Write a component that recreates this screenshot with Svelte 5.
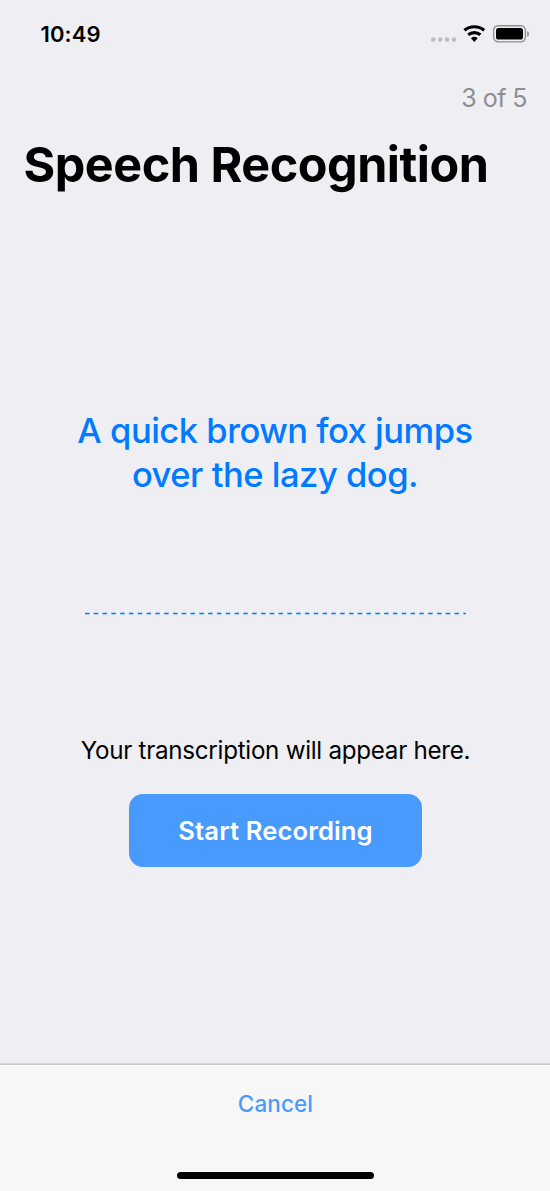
<script>
  const dots = [2.1, 9.1, 16, 22.9];
</script>

<div class="screen">
  <header class="status">
    <span class="time">10:49</span>
    <svg class="indicators" width="100" height="24" viewBox="0 0 100 24" aria-hidden="true">
      {#each dots as x}
        <circle cx={x + 1.1} cy="17.6" r="2.35" fill="#bfbfc3" />
      {/each}
      <g transform="translate(44.3 20.1)" fill="none" stroke="#000" stroke-width="3.1">
        <path d="M-9.9-11.8A15.4 15.4 0 0 1 9.9-11.8" />
        <path d="M-6.1-7.3A9.5 9.5 0 0 1 6.1-7.3" />
        <path d="M0 0L-3.4-3.9A5.2 5.2 0 0 1 3.4-3.9Z" fill="#000" stroke="none" />
      </g>
      <rect x="63.6" y="3.7" width="31.8" height="16.2" rx="4.8" fill="none" stroke="#8f8f93" stroke-width="1.4" />
      <rect x="66" y="6" width="27" height="11.6" rx="2.6" />
      <path d="M97.2 9V14.8Q99 14 99 11.9T97.2 9Z" fill="#8f8f93" />
    </svg>
  </header>
  <div class="progress">3 of 5</div>
  <h1>Speech Recognition</h1>
  <main>
    <p class="phrase">A quick brown fox jumps<br /><span>over the lazy dog.</span></p>
    <svg class="rule" width="382" height="3" viewBox="0 0 382 3" aria-hidden="true">
      <path d="M0 1.5H381" stroke="#a9d0fb" stroke-width="3" stroke-dasharray="4.4 4.4" />
      <path d="M0 1.5H381" stroke="#087bf5" stroke-width="1" stroke-dasharray="4.4 4.4" />
    </svg>
    <p class="hint">Your transcription will appear here.</p>
    <button class="record">Start Recording</button>
  </main>
  <footer>
    <button class="cancel">Cancel</button>
    <div class="home"></div>
  </footer>
</div>

<style>
  :global(body) {
    margin: 0;
    background: #efeef3;
  }
  .screen {
    width: 550px;
    height: 1191px;
    display: flex;
    flex-direction: column;
    overflow: hidden;
    background: #efeef3;
    color: #000;
    font-family: Inter, sans-serif;
  }
  .status {
    display: flex;
    justify-content: space-between;
    height: 60px;
    padding: 22px 20px 0 40.5px;
    box-sizing: border-box;
  }
  .time {
    font-size: 22px;
    font-weight: 600;
    line-height: 24px;
    letter-spacing: 0.1px;
  }
  .indicators {
    display: block;
  }
  .progress {
    height: 60px;
    padding: 22px 23px 0 0;
    box-sizing: border-box;
    text-align: right;
    font-size: 25px;
    line-height: 32px;
    letter-spacing: -0.55px;
    color: #8e8e92;
  }
  h1 {
    margin: 0;
    padding: 15px 0 0 23.5px;
    height: 80px;
    box-sizing: border-box;
    font-size: 48.5px;
    line-height: 60px;
    font-weight: 700;
    letter-spacing: -0.48px;
    white-space: nowrap;
  }
  main {
    flex: 1;
    display: flex;
    flex-direction: column;
    align-items: center;
    padding-top: 209px;
  }
  p {
    margin: 0;
    white-space: nowrap;
  }
  .phrase {
    text-align: center;
    font-size: 34.5px;
    line-height: 43.5px;
    font-weight: 500;
    letter-spacing: -0.48px;
    color: #007aff;
  }
  .rule {
    display: block;
    margin: 116px 0 0 1px;
  }
  .hint {
    margin: 120px 0 0 1px;
    font-size: 24.2px;
    line-height: 32px;
    letter-spacing: -0.28px;
  }
  button {
    border: 0;
    padding: 0;
    font-family: inherit;
  }
  .record {
    margin-top: 27px;
    width: 293px;
    height: 73px;
    padding-left: 1px;
    border-radius: 14px;
    background: #489bfd;
    color: #fff;
    font-size: 25.6px;
    font-weight: 600;
    letter-spacing: 0.13px;
  }
  footer {
    height: 127px;
    display: flex;
    flex-direction: column;
    align-items: center;
    justify-content: space-between;
    box-sizing: border-box;
    padding: 23px 0 12px;
    border-top: 1px solid #c8c8cc;
    box-shadow: 0 -1px 1px #d9d9de;
    background: #f7f7f7;
  }
  .cancel {
    padding-left: 1px;
    background: none;
    color: #489bfd;
    font-size: 22.5px;
    line-height: 32px;
    font-weight: 500;
    letter-spacing: 0.1px;
  }
  .home {
    width: 197px;
    height: 7px;
    border-radius: 4px;
    background: #000;
  }
</style>
